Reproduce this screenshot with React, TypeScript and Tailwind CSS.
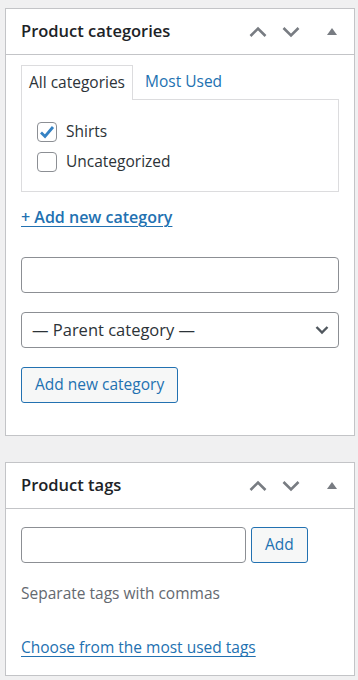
import React from "react"

function PanelHeader({ title }: { title: string }) {
    return (
        <div className="flex h-[46px] items-center justify-between border-b border-[#c3c4c7] pl-[15px] pr-[17px]">
            <h2 className="text-[16.5px] font-semibold text-[#1d2327]">{title}</h2>
            <div className="flex items-center">
                {/* Move up */}
                <svg width="18" height="14" viewBox="0 0 18 14" className="mr-[15px]">
                    <path d="M1.5 11 L9 3.5 L16.5 11" fill="none" stroke="#787c82" strokeWidth="2.6" />
                </svg>
                {/* Move down */}
                <svg width="18" height="14" viewBox="0 0 18 14" className="mr-[27px]">
                    <path d="M1.5 3 L9 10.5 L16.5 3" fill="none" stroke="#787c82" strokeWidth="2.6" />
                </svg>
                {/* Toggle */}
                <svg width="10" height="8" viewBox="0 0 10 8">
                    <path d="M0 7 L5 0 L10 7 Z" fill="#787c82" />
                </svg>
            </div>
        </div>
    )
}

function Checkbox({ checked, label }: { checked?: boolean; label: string }) {
    return (
        <label className="flex h-[30px] items-center">
            <span className="flex h-[20px] w-[20px] items-center justify-center rounded-[4px] border border-[#8c8f94] bg-white">
                {checked && (
                    <svg width="16" height="14" viewBox="0 0 16 14">
                        <path d="M2 7.5 L6 11.5 L14 2" fill="none" stroke="#3582c4" strokeWidth="2.8" />
                    </svg>
                )}
            </span>
            <span className="ml-[9px] text-[15.5px] text-[#2c3338]">{label}</span>
        </label>
    )
}

export default function App() {
    return (
        <div className="min-h-[680px] bg-[#f0f0f1] pt-[8px] pl-[5px] pr-[3px] font-['Open_Sans',sans-serif]">
            {/* Product categories */}
            <div className="w-[350px] border border-[#c3c4c7] bg-white">
                <PanelHeader title="Product categories" />
                <div className="px-[15px] pt-[10px] pb-[32px]">
                    <div className="flex h-[34px] items-end">
                        <div className="relative z-10 -mb-px flex h-[35px] items-center border border-b-0 border-[#dcdcde] bg-white px-[7px] text-[15.5px] text-[#2c3338]">
                            All categories
                        </div>
                        <div className="flex h-[34px] items-center px-[12px] text-[15.5px] text-[#2271b1]">Most Used</div>
                    </div>
                    <div className="h-[93px] border border-[#dcdcde] px-[15px] pt-[17px]">
                        <Checkbox checked label="Shirts" />
                        <Checkbox label="Uncategorized" />
                    </div>
                    <a className="mt-[13px] inline-block text-[16px] font-semibold text-[#2271b1] underline underline-offset-[3px]">
                        + Add new category
                    </a>
                    <input className="mt-[28px] block h-[36px] w-full rounded-[4px] border border-[#8c8f94] bg-white" />
                    <div className="mt-[19px] flex h-[36px] w-full items-center justify-between rounded-[4px] border border-[#8c8f94] bg-white pl-[10px] pr-[9px]">
                        <span className="text-[16.5px] text-[#2c3338]">— Parent category —</span>
                        <svg width="14" height="10" viewBox="0 0 14 10">
                            <path d="M1.5 2 L7 7.5 L12.5 2" fill="none" stroke="#50575e" strokeWidth="2.4" />
                        </svg>
                    </div>
                    <button className="mt-[19px] flex h-[36px] items-center rounded-[3px] border border-[#2271b1] bg-[#f6f7f7] px-[13px] text-[15.5px] text-[#2271b1]">
                        Add new category
                    </button>
                </div>
            </div>

            {/* Product tags */}
            <div className="mt-[26px] w-[350px] border border-[#c3c4c7] bg-white">
                <PanelHeader title="Product tags" />
                <div className="px-[15px] pt-[18px] pb-[15px]">
                    <div className="flex items-center">
                        <input className="block h-[36px] w-[225px] rounded-[4px] border border-[#8c8f94] bg-white" />
                        <button className="ml-[5px] flex h-[36px] items-center rounded-[3px] border border-[#2271b1] bg-[#f6f7f7] px-[13px] text-[15.5px] text-[#2271b1]">
                            Add
                        </button>
                    </div>
                    <p className="mt-[19px] text-[15.5px] text-[#646970]">Separate tags with commas</p>
                    <a className="mt-[31px] inline-block text-[15.5px] text-[#2271b1] underline underline-offset-[3px]">
                        Choose from the most used tags
                    </a>
                </div>
            </div>
        </div>
    )
}
